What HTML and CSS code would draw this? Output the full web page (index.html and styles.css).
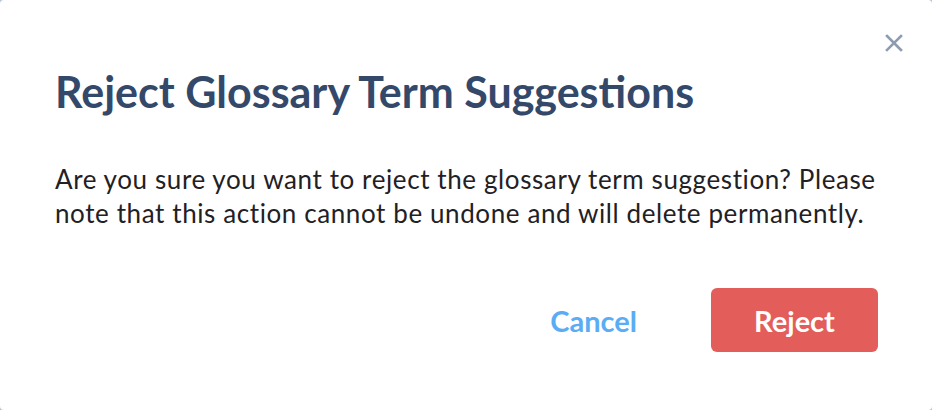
FILE: index.html
```html
<!DOCTYPE html>
<html lang="en">
  <head>
    <meta charset="UTF-8" />
    <meta name="viewport" content="width=device-width, initial-scale=1.0" />
    <title>Reject Glossary Term Suggestions</title>
    <link rel="stylesheet" href="styles.css">
  </head>
  <body>
    <div class="modal">
      <button class="close" aria-label="Close">
        <svg width="18" height="18" viewBox="0 0 18 18">
          <path d="M2 2 L16 16 M16 2 L2 16" stroke="#8d9cb0" stroke-width="2.6" stroke-linecap="square" />
        </svg>
      </button>
      <h2>Reject Glossary Term Suggestions</h2>
      <p class="message">
        Are you sure you want to reject the glossary term suggestion? Please
        note that this action cannot be undone and will delete permanently.
      </p>
      <div class="actions">
        <button class="btn-cancel">Cancel</button>
        <button class="btn-reject">Reject</button>
      </div>
    </div>
  </body>
</html>
```

FILE: styles.css
```css
* {
  box-sizing: border-box;
  margin: 0;
  padding: 0;
}
body {
  font-family: "Lato", "Noto Sans", sans-serif;
  background: #b8c4d4;
  width: 932px;
  height: 410px;
  overflow: hidden;
}
.modal {
  position: relative;
  background: #ffffff;
  width: 932px;
  height: 410px;
  border-radius: 4px;
  padding: 66px 54px 0 55px;
}
.close {
  position: absolute;
  top: 34px;
  right: 29px;
  background: none;
  border: none;
  cursor: pointer;
  display: flex;
}
h2 {
  font-size: 43px;
  font-weight: 700;
  color: #34496a;
  line-height: 52px;
  margin-bottom: 44px;
}
.message {
  font-size: 26px;
  letter-spacing: 0.6px;
  line-height: 34px;
  color: #1f2124;
  margin-right: -8px;
  margin-bottom: 58px;
}
.actions {
  display: flex;
  justify-content: flex-end;
  align-items: center;
  gap: 74px;
}
.btn-cancel {
  background: none;
  border: none;
  font-family: inherit;
  font-size: 29px;
  font-weight: 700;
  color: #5aadf5;
  cursor: pointer;
}
.btn-reject {
  width: 167px;
  height: 64px;
  border: none;
  border-radius: 6px;
  background: #e35d5a;
  color: #ffffff;
  font-family: inherit;
  font-size: 29px;
  font-weight: 700;
  cursor: pointer;
}
```
